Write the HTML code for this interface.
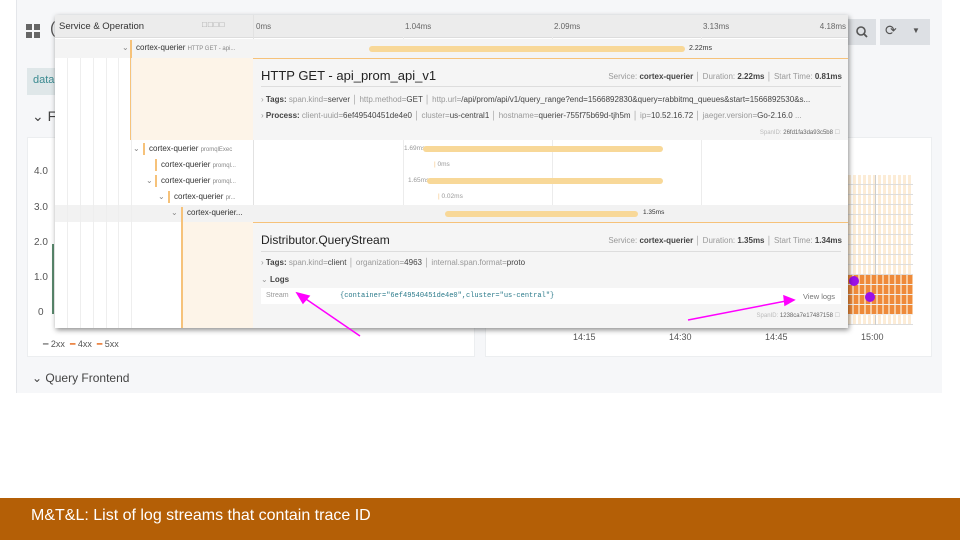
<!DOCTYPE html><html><head><style>
*{margin:0;padding:0;box-sizing:border-box}
body{width:960px;height:540px;position:relative;background:#fff;font-family:"Liberation Sans",sans-serif;overflow:hidden;color:#333}
.a{position:absolute;white-space:nowrap}
.s{font-size:8px;color:#888}
.b{background:#f8d898;border-radius:3px;height:6px;position:absolute}
.t{font-size:8px;color:#999}
.t b{color:#444;font-weight:normal}
</style></head><body>
<div class="a" style="left:16px;top:0;width:926px;height:393px;background:#f6f7f9;border-left:1px solid #e4e6ea"></div>
<div class="a" style="left:26px;top:24px;width:6px;height:6px;background:#666;box-shadow:8px 0 #666,0 8px #666,8px 8px #666"></div>
<div class="a" style="left:50px;top:20px;font-size:16px;color:#555">(</div>
<div class="a" style="left:27px;top:68px;width:30px;height:27px;background:#dfe7e9"></div>
<div class="a" style="left:33px;top:74px;font-size:11px;color:#3a8a90">data</div>
<div class="a" style="left:32px;top:108px;font-size:14px;color:#444">⌄ F</div>
<div class="a" style="left:848px;top:19px;width:28px;height:26px;background:#dde0e4"></div>
<svg class="a" style="left:855px;top:25px" width="14" height="14"><circle cx="6" cy="6" r="4" stroke="#555" stroke-width="1.6" fill="none"/><line x1="9" y1="9" x2="12" y2="12" stroke="#555" stroke-width="1.8"/></svg>
<div class="a" style="left:880px;top:19px;width:50px;height:26px;background:#dde0e4"></div>
<div class="a" style="left:885px;top:22px;font-size:14px;color:#555">⟳</div>
<div class="a" style="left:912px;top:26px;font-size:8px;color:#555">▼</div>
<div class="a" style="left:27px;top:137px;width:448px;height:220px;background:#fff;border:1px solid #eceef0"></div>
<div class="a" style="left:485px;top:137px;width:447px;height:220px;background:#fff;border:1px solid #eceef0"></div>
<div class="a" style="left:34px;top:166px;font-size:10px;color:#555">4.0</div>
<div class="a" style="left:34px;top:202px;font-size:10px;color:#555">3.0</div>
<div class="a" style="left:34px;top:237px;font-size:10px;color:#555">2.0</div>
<div class="a" style="left:34px;top:272px;font-size:10px;color:#555">1.0</div>
<div class="a" style="left:38px;top:307px;font-size:10px;color:#555">0</div>
<div class="a" style="left:52px;top:244px;width:2px;height:70px;background:#5a8a6e"></div>
<div class="a" style="left:43px;top:339px;font-size:9px;color:#555"><span style="color:#888">━</span> 2xx &nbsp;<span style="color:#e8742a">━</span> 4xx &nbsp;<span style="color:#e8742a">━</span> 5xx</div>
<div class="a" style="left:573px;top:332px;font-size:9px;color:#555">14:15</div>
<div class="a" style="left:669px;top:332px;font-size:9px;color:#555">14:30</div>
<div class="a" style="left:765px;top:332px;font-size:9px;color:#555">14:45</div>
<div class="a" style="left:861px;top:332px;font-size:9px;color:#555">15:00</div>
<div class="a" style="left:848px;top:175px;width:65px;height:150px;background:repeating-linear-gradient(180deg,transparent 0 9px,#ddd 9px 10px),repeating-linear-gradient(90deg,#fcecd6 0 3px,#fff 3px 5px)"></div>
<div class="a" style="left:848px;top:175px;width:65px;height:150px;background:linear-gradient(90deg,transparent 0 27px,#ccc 27px 28px,transparent 28px)"></div>
<div class="a" style="left:848px;top:275px;width:65px;height:40px;background:repeating-linear-gradient(180deg,transparent 0 9px,#eee 9px 10px),repeating-linear-gradient(90deg,#ee8a3a 0 4px,#f8c89a 4px 6px)"></div>
<div class="a" style="left:849px;top:276px;width:10px;height:10px;border-radius:50%;background:#9b10e8"></div>
<div class="a" style="left:865px;top:292px;width:10px;height:10px;border-radius:50%;background:#9b10e8"></div>
<div class="a" style="left:32px;top:371px;font-size:12px;color:#444">⌄ Query Frontend</div>

<div class="a" style="left:55px;top:15px;width:793px;height:313px;background:#fff;box-shadow:1px 2px 5px rgba(0,0,0,.45);overflow:hidden">
 <div class="a" style="left:0;top:0;width:793px;height:23px;background:#ececec;border-bottom:1px solid #ddd"></div>
 <div class="a" style="left:4px;top:6px;font-size:9.5px;color:#333">Service &amp; Operation</div>
 <div class="a" style="left:147px;top:5px;font-size:8px;color:#999;letter-spacing:1px">□□□□</div>
 <div class="a" style="left:201px;top:7px;font-size:8px;color:#666">0ms</div>
 <div class="a" style="left:350px;top:7px;font-size:8px;color:#666">1.04ms</div>
 <div class="a" style="left:499px;top:7px;font-size:8px;color:#666">2.09ms</div>
 <div class="a" style="left:648px;top:7px;font-size:8px;color:#666">3.13ms</div>
 <div class="a" style="right:2px;top:7px;font-size:8px;color:#666">4.18ms</div>
 <div class="a" style="left:198px;top:0;width:1px;height:313px;background:#e2e2e2"></div>
 <div class="a" style="left:348px;top:0;width:1px;height:313px;background:#ececec"></div>
 <div class="a" style="left:497px;top:0;width:1px;height:313px;background:#ececec"></div>
 <div class="a" style="left:646px;top:0;width:1px;height:313px;background:#ececec"></div>
 <div class="a" style="left:0;top:24px;width:793px;height:19px;background:#f4f4f4"></div>
 <div class="a" style="left:67px;top:28px;font-size:8px;color:#888">⌄</div>
 <div class="a" style="left:75px;top:25px;width:2px;height:100px;background:#f6c27a"></div>
 <div class="a" style="left:81px;top:28px;font-size:8px;color:#333">cortex-querier <span class="s" style="font-size:6px">HTTP GET - api...</span></div>
 <div class="b" style="left:314px;top:31px;width:316px"></div>
 <div class="a" style="left:634px;top:30px;font-size:7px;color:#333">2.22ms</div>
 <div class="a" style="left:77px;top:43px;width:121px;height:82px;background:#fdf4e8"></div>
 <div class="a" style="left:198px;top:43px;width:595px;height:82px;background:#f5f5f5;border-top:1px solid #f6c27a"></div>
 <div class="a" style="left:206px;top:53px;font-size:13px;color:#222">HTTP GET - api_prom_api_v1</div>
 <div class="a t" style="right:6px;top:57px">Service: <b style="font-weight:bold">cortex-querier</b> │ Duration: <b style="font-weight:bold">2.22ms</b> │ Start Time: <b style="font-weight:bold">0.81ms</b></div>
 <div class="a" style="left:206px;top:71px;width:580px;height:1px;background:#ddd"></div>
 <div class="a t" style="left:206px;top:80px">› <b style="font-weight:bold">Tags:</b> span.kind=<b>server</b> │ http.method=<b>GET</b> │ http.url=<b>/api/prom/api/v1/query_range?end=1566892830&amp;query=rabbitmq_queues&amp;start=1566892530&amp;s...</b></div>
 <div class="a t" style="left:206px;top:96px">› <b style="font-weight:bold">Process:</b> client-uuid=<b>6ef49540451de4e0</b> │ cluster=<b>us-central1</b> │ hostname=<b>querier-755f75b69d-tjh5m</b> │ ip=<b>10.52.16.72</b> │ jaeger.version=<b>Go-2.16.0</b> ...</div>
 <div class="a" style="right:8px;top:114px;font-size:6px;color:#bbb">SpanID: <span style="color:#666">26fd1fa3da93c5b8</span> ☐</div>
 <div class="a" style="left:0;top:190px;width:793px;height:17px;background:#f2f2f2"></div>
 <div class="a" style="left:78px;top:129px;font-size:8px;color:#888">⌄</div>
 <div class="a" style="left:88px;top:128px;width:2px;height:12px;background:#f6c27a"></div>
 <div class="a" style="left:94px;top:129px;font-size:8px;color:#333">cortex-querier <span class="s" style="font-size:6px">promqlExec</span></div>
 <div class="a" style="left:100px;top:144px;width:2px;height:12px;background:#f6c27a"></div>
 <div class="a" style="left:106px;top:145px;font-size:8px;color:#333">cortex-querier <span class="s" style="font-size:6px">promql...</span></div>
 <div class="a" style="left:91px;top:161px;font-size:8px;color:#888">⌄</div>
 <div class="a" style="left:100px;top:160px;width:2px;height:12px;background:#f6c27a"></div>
 <div class="a" style="left:106px;top:161px;font-size:8px;color:#333">cortex-querier <span class="s" style="font-size:6px">promql...</span></div>
 <div class="a" style="left:103px;top:177px;font-size:8px;color:#888">⌄</div>
 <div class="a" style="left:113px;top:176px;width:2px;height:12px;background:#f6c27a"></div>
 <div class="a" style="left:119px;top:177px;font-size:8px;color:#333">cortex-querier <span class="s" style="font-size:6px">pr...</span></div>
 <div class="a" style="left:116px;top:193px;font-size:8px;color:#888">⌄</div>
 <div class="a" style="left:126px;top:192px;width:2px;height:121px;background:#f6c27a"></div>
 <div class="a" style="left:132px;top:193px;font-size:8px;color:#333">cortex-querier...</div>
 <div class="a" style="left:12px;top:43px;width:1px;height:270px;background:#eee;box-shadow:13px 0 #eee,26px 0 #eee,39px 0 #eee,51px 0 #eee,64px 0 #eee"></div>
 <div class="a" style="left:349px;top:130px;font-size:6.5px;color:#999">1.69ms</div><div class="b" style="left:368px;top:131px;width:240px"></div>
 <div class="a" style="left:379px;top:146px;font-size:6.5px;color:#999"><span style="color:#f6c27a">|</span> 0ms</div>
 <div class="a" style="left:353px;top:162px;font-size:6.5px;color:#999">1.65ms</div><div class="b" style="left:372px;top:163px;width:236px"></div>
 <div class="a" style="left:383px;top:178px;font-size:6.5px;color:#999"><span style="color:#f6c27a">|</span> 0.02ms</div>
 <div class="b" style="left:390px;top:196px;width:193px"></div><div class="a" style="left:588px;top:194px;font-size:6.5px;color:#333">1.35ms</div>
 <div class="a" style="left:128px;top:207px;width:70px;height:106px;background:#fdf4e8"></div>
 <div class="a" style="left:198px;top:207px;width:595px;height:106px;background:#f5f5f5;border-top:1px solid #f6c27a"></div>
 <div class="a" style="left:206px;top:218px;font-size:12px;color:#222">Distributor.QueryStream</div>
 <div class="a t" style="right:6px;top:221px">Service: <b style="font-weight:bold">cortex-querier</b> │ Duration: <b style="font-weight:bold">1.35ms</b> │ Start Time: <b style="font-weight:bold">1.34ms</b></div>
 <div class="a" style="left:206px;top:236px;width:580px;height:1px;background:#ddd"></div>
 <div class="a t" style="left:206px;top:243px">› <b style="font-weight:bold">Tags:</b> span.kind=<b>client</b> │ organization=<b>4963</b> │ internal.span.format=<b>proto</b></div>
 <div class="a t" style="left:206px;top:260px">⌄ <b style="font-weight:bold">Logs</b></div>
 <div class="a" style="left:206px;top:273px;width:580px;height:16px;background:#fff"></div>
 <div class="a" style="left:211px;top:277px;font-size:7px;color:#999">Stream</div>
 <div class="a" style="left:285px;top:277px;font-size:7px;color:#2a7a8a;font-family:'Liberation Mono',monospace">{container="6ef49540451de4e0",cluster="us-central"}</div>
 <div class="a" style="left:748px;top:277px;font-size:7.5px;color:#777">View logs</div>
 <div class="a" style="right:8px;top:297px;font-size:6px;color:#bbb">SpanID: <span style="color:#666">1238ca7e17487158</span> ☐</div>
</div>
<svg class="a" style="left:0;top:0" width="960" height="540"><g stroke="#ff00ff" stroke-width="1.5" fill="#ff00ff"><line x1="360" y1="336" x2="303" y2="297"/><polygon points="297,293 309,296 303,303"/><line x1="688" y1="320" x2="786" y2="301"/><polygon points="794,300 784,296 785,305"/></g></svg>
<div class="a" style="left:0;top:498px;width:960px;height:42px;background:#b45f06"></div>
<div class="a" style="left:31px;top:507px;font-size:16px;color:#fff">M&amp;T&amp;L: List of log streams that contain trace ID</div>
</body></html>
